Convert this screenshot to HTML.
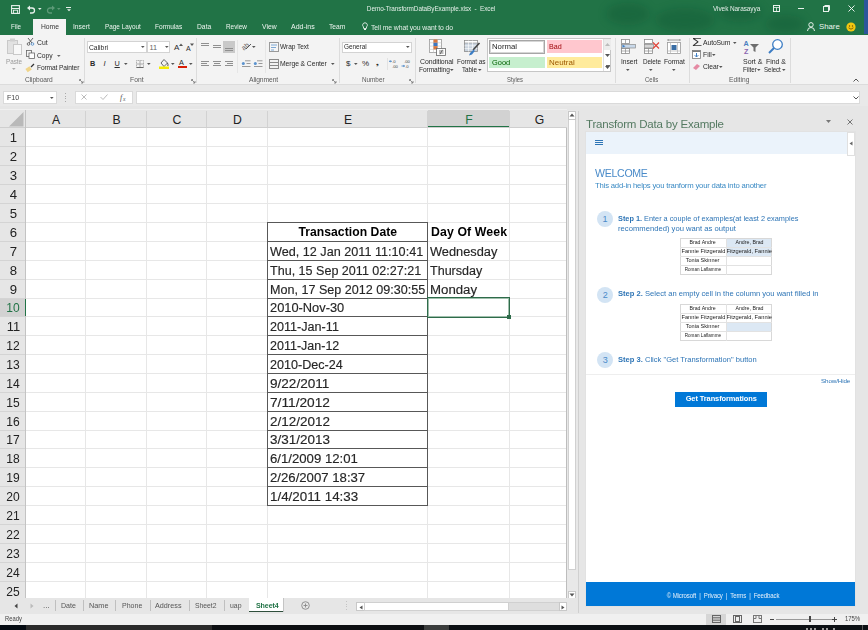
<!DOCTYPE html>
<html><head><meta charset="utf-8">
<style>
*{margin:0;padding:0;box-sizing:border-box}
html,body{width:868px;height:630px;overflow:hidden;background:#f0f0f0;font-family:"Liberation Sans",sans-serif;position:relative}
.a{position:absolute}
.t{position:absolute;white-space:nowrap;line-height:1}
svg.a{overflow:visible}
</style></head><body>
<div class="a" style="left:0px;top:0px;width:868px;height:35px;background:#217346"></div>
<div class="a" style="left:864px;top:0px;width:4px;height:34px;background:#2b579a"></div>
<svg class="a" style="left:590px;top:0px" width="230" height="34" viewBox="0 0 230 34"><defs><filter id="bl" x="-50%" y="-50%" width="200%" height="200%"><feGaussianBlur stdDeviation="4"/></filter></defs><g filter="url(#bl)" fill="#0f5530" opacity="0.35"><ellipse cx="38" cy="14" rx="22" ry="11"/><ellipse cx="95" cy="20" rx="30" ry="12"/><ellipse cx="150" cy="12" rx="22" ry="10"/><ellipse cx="195" cy="24" rx="20" ry="9"/></g></svg>
<svg class="a" style="left:11px;top:5px" width="9" height="9" viewBox="0 0 9 9"><rect x="0.6" y="0.6" width="7.8" height="7.8" fill="none" stroke="#e8f1ec" stroke-width="1.1"/><path d="M0.6,3.5 H8.4" stroke="#e8f1ec" stroke-width="1"/><rect x="2.5" y="5.2" width="4" height="3.2" fill="none" stroke="#e8f1ec" stroke-width="0.9"/></svg>
<svg class="a" style="left:27px;top:5px" width="8" height="9" viewBox="0 0 8 9"><path d="M2,3 H5 A2.5,2.5 0 0 1 5,8 H3" fill="none" stroke="#e8f1ec" stroke-width="1.3"/><polygon points="0,3 3,0.5 3,5.5" fill="#e8f1ec"/></svg>
<svg class="a" style="left:36.7px;top:7.2px" width="5.6" height="3.6" viewBox="0 0 5.6 3.6"><polygon points="1,1.08 4.6,1.08 2.8,2.8800000000000003" fill="#e8f1ec"/></svg>
<svg class="a" style="left:47px;top:5px" width="8" height="9" viewBox="0 0 8 9"><path d="M6,3 H3 A2.5,2.5 0 0 0 3,8 H5" fill="none" stroke="#5e9a78" stroke-width="1.3"/><polygon points="8,3 5,0.5 5,5.5" fill="#5e9a78"/></svg>
<svg class="a" style="left:56.2px;top:7.2px" width="5.6" height="3.6" viewBox="0 0 5.6 3.6"><polygon points="1,1.08 4.6,1.08 2.8,2.8800000000000003" fill="#5e9a78"/></svg>
<div class="a" style="left:66px;top:7px;width:5px;height:1px;background:#e8f1ec"></div>
<svg class="a" style="left:65.5px;top:8px" width="6" height="4" viewBox="0 0 6 4"><polygon points="1,1.2 5,1.2 3,3.2" fill="#e8f1ec"/></svg>
<div class="t" style="left:231.5px;width:400px;text-align:center;top:5.07px;font-size:7.6px;color:#e4efe8;letter-spacing:-0.1px;transform-origin:50% 50%;"><span style="display:inline-block;transform:scaleX(0.8440);">Demo-TransformDataByExample.xlsx&nbsp; - &nbsp;Excel</span></div>
<div class="t" style="left:712.5px;top:5.07px;font-size:7.6px;color:#e4efe8;letter-spacing:-0.1px;transform-origin:0 50%;transform:scaleX(0.8521);">Vivek Narasayya</div>
<svg class="a" style="left:773px;top:5px" width="7" height="7" viewBox="0 0 7 7"><rect x="0.5" y="0.5" width="6" height="6" fill="none" stroke="#e8f1ec"/><path d="M0.5,2.5 H6.5 M3.5,2.5 V6.5" stroke="#e8f1ec" stroke-width="0.8"/></svg>
<div class="a" style="left:798px;top:8px;width:6px;height:1px;background:#e8f1ec"></div>
<svg class="a" style="left:823px;top:5px" width="7" height="7" viewBox="0 0 7 7"><rect x="0.5" y="1.5" width="5" height="5" fill="none" stroke="#e8f1ec"/><path d="M1.5,0.5 H6.5 V5.5" fill="none" stroke="#e8f1ec"/></svg>
<svg class="a" style="left:848px;top:5px" width="7" height="7" viewBox="0 0 7 7"><path d="M0.5,0.5 L6.5,6.5 M6.5,0.5 L0.5,6.5" stroke="#e8f1ec" stroke-width="1"/></svg>
<div class="a" style="left:33px;top:19px;width:33px;height:16px;background:#f3f3f3"></div>
<div class="t" style="left:11.0px;top:22.87px;font-size:7.6px;color:#eef5f0;transform-origin:0 50%;transform:scaleX(0.8212);">File</div>
<div class="t" style="left:40.5px;top:22.87px;font-size:7.6px;color:#333;transform-origin:0 50%;transform:scaleX(0.8862);">Home</div>
<div class="t" style="left:73.19999999999999px;top:22.87px;font-size:7.6px;color:#eef5f0;transform-origin:0 50%;transform:scaleX(0.8821);">Insert</div>
<div class="t" style="left:105.0px;top:22.87px;font-size:7.6px;color:#eef5f0;transform-origin:0 50%;transform:scaleX(0.8383);">Page Layout</div>
<div class="t" style="left:155.1px;top:22.87px;font-size:7.6px;color:#eef5f0;transform-origin:0 50%;transform:scaleX(0.8611);">Formulas</div>
<div class="t" style="left:197.2px;top:22.87px;font-size:7.6px;color:#eef5f0;transform-origin:0 50%;transform:scaleX(0.8886);">Data</div>
<div class="t" style="left:226.29999999999998px;top:22.87px;font-size:7.6px;color:#eef5f0;transform-origin:0 50%;transform:scaleX(0.8375);">Review</div>
<div class="t" style="left:261.5px;top:22.87px;font-size:7.6px;color:#eef5f0;transform-origin:0 50%;transform:scaleX(0.8978);">View</div>
<div class="t" style="left:291.0px;top:22.87px;font-size:7.6px;color:#eef5f0;transform-origin:0 50%;transform:scaleX(0.9227);">Add-ins</div>
<div class="t" style="left:329.3px;top:22.87px;font-size:7.6px;color:#eef5f0;transform-origin:0 50%;transform:scaleX(0.8806);">Team</div>
<svg class="a" style="left:362px;top:22px" width="6" height="9" viewBox="0 0 6 9"><path d="M3,0.8 A2.3,2.3 0 0 1 4.6,4.8 L4.3,6.5 H1.7 L1.4,4.8 A2.3,2.3 0 0 1 3,0.8 Z" fill="none" stroke="#e8f1ec" stroke-width="0.9"/><rect x="2" y="7" width="2" height="1" fill="#e8f1ec"/></svg>
<div class="t" style="left:370.5px;top:23.57px;font-size:7.6px;color:#e4efe8;letter-spacing:-0.1px;transform-origin:0 50%;transform:scaleX(0.9016);">Tell me what you want to do</div>
<svg class="a" style="left:807px;top:22px" width="8" height="9" viewBox="0 0 8 9"><circle cx="4" cy="2.8" r="2.2" fill="none" stroke="#e8f1ec" stroke-width="1"/><path d="M0.5,9 A3.5,3.5 0 0 1 7.5,9" fill="none" stroke="#e8f1ec" stroke-width="1"/></svg>
<div class="t" style="left:819px;top:23.40px;font-size:7.8px;color:#eef5f0;transform-origin:0 50%;-webkit-text-stroke:0.25px #eef5f0transform:scaleX(0.7966);">Share</div>
<svg class="a" style="left:846px;top:22px" width="10" height="10" viewBox="0 0 10 10"><circle cx="5" cy="5" r="4.6" fill="#f2c811"/><circle cx="3.5" cy="4" r="0.7" fill="#6b4e00"/><circle cx="6.5" cy="4" r="0.7" fill="#6b4e00"/><path d="M2.6,5.8 Q5,8.6 7.4,5.8" fill="none" stroke="#6b4e00" stroke-width="0.8"/></svg>
<div class="a" style="left:0px;top:35px;width:868px;height:50px;background:#f3f3f3"></div>
<div class="a" style="left:0px;top:84px;width:868px;height:1px;background:#dcdcdc"></div>
<div class="a" style="left:84px;top:38px;width:1px;height:45px;background:#dcdcdc"></div>
<div class="a" style="left:196px;top:38px;width:1px;height:45px;background:#dcdcdc"></div>
<div class="a" style="left:339px;top:38px;width:1px;height:45px;background:#dcdcdc"></div>
<div class="a" style="left:415px;top:38px;width:1px;height:45px;background:#dcdcdc"></div>
<div class="a" style="left:615px;top:38px;width:1px;height:45px;background:#dcdcdc"></div>
<div class="a" style="left:689px;top:38px;width:1px;height:45px;background:#dcdcdc"></div>
<div class="a" style="left:790px;top:38px;width:1px;height:45px;background:#dcdcdc"></div>
<svg class="a" style="left:7px;top:38px" width="15" height="17" viewBox="0 0 15 17"><rect x="0.5" y="2.5" width="10" height="13" fill="#e2e2e2" stroke="#c9c9c9"/><rect x="3" y="0.5" width="5" height="3" fill="#d0d0d0"/><rect x="6.5" y="6.5" width="8" height="10" fill="#f8f8f8" stroke="#c9c9c9"/></svg>
<div class="t" style="left:6px;top:57.92px;font-size:7.3px;color:#9a9a9a;letter-spacing:-0.05px;transform-origin:0 50%;transform:scaleX(0.8702);">Paste</div>
<svg class="a" style="left:10.7px;top:67.2px" width="5.6" height="3.6" viewBox="0 0 5.6 3.6"><polygon points="1,1.08 4.6,1.08 2.8,2.8800000000000003" fill="#aaa"/></svg>
<svg class="a" style="left:27px;top:38px" width="7" height="8" viewBox="0 0 7 8"><circle cx="1.5" cy="6" r="1.3" fill="none" stroke="#555" stroke-width="0.8"/><circle cx="5.5" cy="6" r="1.3" fill="none" stroke="#4a88c7" stroke-width="0.8"/><path d="M1,0 L5,5 M6,0 L2,5" stroke="#555" stroke-width="0.9"/></svg>
<div class="t" style="left:36.8px;top:39.22px;font-size:7.3px;color:#2b2b2b;transform-origin:0 50%;transform:scaleX(0.9358);">Cut</div>
<svg class="a" style="left:26px;top:50px" width="9" height="9" viewBox="0 0 9 9"><rect x="0.5" y="0.5" width="5" height="6" fill="none" stroke="#666" stroke-width="0.8"/><rect x="3" y="3" width="5.5" height="5.5" fill="#fff" stroke="#666" stroke-width="0.8"/></svg>
<div class="t" style="left:36.8px;top:51.62px;font-size:7.3px;color:#2b2b2b;transform-origin:0 50%;transform:scaleX(0.9227);">Copy</div>
<svg class="a" style="left:55.7px;top:53.7px" width="5.6" height="3.6" viewBox="0 0 5.6 3.6"><polygon points="1,1.08 4.6,1.08 2.8,2.8800000000000003" fill="#666"/></svg>
<svg class="a" style="left:26px;top:63px" width="9" height="9" viewBox="0 0 9 9"><rect x="0" y="4" width="5" height="4" fill="#f0d58a" transform="rotate(-35 3 6)"/><path d="M5,4 L8,1" stroke="#333" stroke-width="1.2"/></svg>
<div class="t" style="left:36.8px;top:63.52px;font-size:7.3px;color:#2b2b2b;letter-spacing:-0.12px;transform-origin:0 50%;transform:scaleX(0.9066);">Format Painter</div>
<div class="t" style="left:25px;top:76.32px;font-size:7.3px;color:#5a5a5a;letter-spacing:-0.1px;transform-origin:0 50%;transform:scaleX(0.9106);">Clipboard</div>
<svg class="a" style="left:79px;top:79px" width="5" height="5" viewBox="0 0 5 5"><path d="M0.5,0.5 H2 M0.5,0.5 V2 M1,1 L4,4 M4,2 V4 H2" fill="none" stroke="#777" stroke-width="0.8"/></svg>
<div class="a" style="left:87px;top:41px;width:60px;height:12px;background:#fff;border:1px solid #d3d3d3"></div>
<div class="a" style="left:147px;top:41px;width:23px;height:12px;background:#fff;border:1px solid #d3d3d3"></div>
<div class="t" style="left:89px;top:43.62px;font-size:7.3px;color:#2b2b2b;transform-origin:0 50%;transform:scaleX(0.9247);">Calibri</div>
<svg class="a" style="left:140.2px;top:45.2px" width="5.6" height="3.6" viewBox="0 0 5.6 3.6"><polygon points="1,1.08 4.6,1.08 2.8,2.8800000000000003" fill="#555"/></svg>
<div class="t" style="left:149.5px;top:43.62px;font-size:7.3px;color:#666;">11</div>
<svg class="a" style="left:163.7px;top:45.2px" width="5.6" height="3.6" viewBox="0 0 5.6 3.6"><polygon points="1,1.08 4.6,1.08 2.8,2.8800000000000003" fill="#555"/></svg>
<div class="t" style="left:174px;top:43.73px;font-size:8px;color:#2b2b2b;">A</div>
<svg class="a" style="left:178.5px;top:42.5px" width="4" height="3" viewBox="0 0 4 3"><polygon points="0,3 2,0.5 4,3" fill="#555"/></svg>
<div class="t" style="left:186px;top:44.57px;font-size:7px;color:#2b2b2b;">A</div>
<svg class="a" style="left:190px;top:42.5px" width="4" height="3" viewBox="0 0 4 3"><polygon points="0,0.5 4,0.5 2,3" fill="#555"/></svg>
<div class="t" style="left:90px;top:60.12px;font-size:7.3px;color:#2b2b2b;font-weight:700;">B</div>
<div class="t" style="left:103.5px;top:59.87px;font-size:7.6px;color:#2b2b2b;font-style:italic">I</div>
<div class="t" style="left:114.5px;top:60.12px;font-size:7.3px;color:#2b2b2b;text-decoration:underline">U</div>
<svg class="a" style="left:123.2px;top:61.7px" width="5.6" height="3.6" viewBox="0 0 5.6 3.6"><polygon points="1,1.08 4.6,1.08 2.8,2.8800000000000003" fill="#555"/></svg>
<svg class="a" style="left:136px;top:60px" width="8" height="8" viewBox="0 0 8 8"><rect x="0.5" y="0.5" width="7" height="7" fill="none" stroke="#aaa" stroke-dasharray="1,0.6"/><path d="M4,0.5 V7.5 M0.5,4 H7.5" stroke="#aaa"/><path d="M0.5,7.5 H7.5" stroke="#666"/></svg>
<svg class="a" style="left:146.2px;top:61.7px" width="5.6" height="3.6" viewBox="0 0 5.6 3.6"><polygon points="1,1.08 4.6,1.08 2.8,2.8800000000000003" fill="#555"/></svg>
<svg class="a" style="left:159px;top:58px" width="10" height="11" viewBox="0 0 10 11"><path d="M2,5 L5,1.5 L8.5,5 L5,8.5 Z" fill="none" stroke="#555" stroke-width="0.9"/><path d="M8.5,5 Q9.5,7 8.8,8" stroke="#555" fill="none"/><rect x="0" y="8.5" width="10" height="2.5" fill="#f5ec00"/></svg>
<svg class="a" style="left:169.7px;top:61.7px" width="5.6" height="3.6" viewBox="0 0 5.6 3.6"><polygon points="1,1.08 4.6,1.08 2.8,2.8800000000000003" fill="#555"/></svg>
<div class="t" style="left:179px;top:58.82px;font-size:7.3px;color:#2b2b2b;">A</div>
<div class="a" style="left:177.5px;top:65.8px;width:9px;height:2.3px;background:#d81e06"></div>
<svg class="a" style="left:188.2px;top:61.7px" width="5.6" height="3.6" viewBox="0 0 5.6 3.6"><polygon points="1,1.08 4.6,1.08 2.8,2.8800000000000003" fill="#555"/></svg>
<div class="t" style="left:130px;top:76.22px;font-size:7.3px;color:#5a5a5a;transform-origin:0 50%;transform:scaleX(0.9261);">Font</div>
<svg class="a" style="left:191px;top:79px" width="5" height="5" viewBox="0 0 5 5"><path d="M0.5,0.5 H2 M0.5,0.5 V2 M1,1 L4,4 M4,2 V4 H2" fill="none" stroke="#777" stroke-width="0.8"/></svg>
<div class="a" style="left:237px;top:40px;width:1px;height:33px;background:#e6e6e6"></div>
<div class="a" style="left:265px;top:40px;width:1px;height:33px;background:#e6e6e6"></div>
<div class="a" style="left:201px;top:42.5px;width:8px;height:1px;background:#8f8f8f"></div>
<div class="a" style="left:201px;top:44.7px;width:8px;height:1px;background:#8f8f8f"></div>
<div class="a" style="left:213px;top:45.0px;width:8px;height:1px;background:#8f8f8f"></div>
<div class="a" style="left:213px;top:47.2px;width:8px;height:1px;background:#8f8f8f"></div>
<div class="a" style="left:223px;top:41px;width:12px;height:12px;background:#c9c9c9"></div>
<div class="a" style="left:225px;top:47.5px;width:8px;height:1px;background:#8f8f8f"></div>
<div class="a" style="left:225px;top:49.7px;width:8px;height:1px;background:#8f8f8f"></div>
<svg class="a" style="left:241px;top:42px" width="12" height="8" viewBox="0 0 12 8"><text x="0" y="7" font-size="7" font-family="Liberation Sans" fill="#555" transform="rotate(-40 4 4)">ab</text><path d="M5,7 L10,2" stroke="#555"/></svg>
<svg class="a" style="left:250.7px;top:44.7px" width="5.6" height="3.6" viewBox="0 0 5.6 3.6"><polygon points="1,1.08 4.6,1.08 2.8,2.8800000000000003" fill="#555"/></svg>
<svg class="a" style="left:269px;top:42px" width="10" height="10" viewBox="0 0 10 10"><rect x="0.5" y="0.5" width="9" height="9" fill="#f6f6f6" stroke="#9a9a9a"/><path d="M2,3 H8 M2,5.5 H7 M2,8 H5" stroke="#6f9fd0" stroke-width="0.9"/></svg>
<div class="t" style="left:280.2px;top:43.02px;font-size:7.3px;color:#2b2b2b;letter-spacing:-0.05px;transform-origin:0 50%;transform:scaleX(0.8970);">Wrap Text</div>
<div class="a" style="left:201px;top:61px;width:8px;height:1px;background:#8f8f8f"></div>
<div class="a" style="left:201px;top:63px;width:6px;height:1px;background:#8f8f8f"></div>
<div class="a" style="left:201px;top:65px;width:8px;height:1px;background:#8f8f8f"></div>
<div class="a" style="left:213px;top:61px;width:8px;height:1px;background:#8f8f8f"></div>
<div class="a" style="left:214px;top:63px;width:6px;height:1px;background:#8f8f8f"></div>
<div class="a" style="left:213px;top:65px;width:8px;height:1px;background:#8f8f8f"></div>
<div class="a" style="left:225px;top:61px;width:8px;height:1px;background:#8f8f8f"></div>
<div class="a" style="left:227px;top:63px;width:6px;height:1px;background:#8f8f8f"></div>
<div class="a" style="left:225px;top:65px;width:8px;height:1px;background:#8f8f8f"></div>
<svg class="a" style="left:241px;top:60px" width="10" height="8" viewBox="0 0 10 8"><path d="M4,0.8 H9.5 M5.5,3.5 H9.5 M1,6.5 H9.5" stroke="#8f8f8f" stroke-width="0.9"/><circle cx="2.3" cy="3.5" r="1.5" fill="#5b93cf"/></svg>
<svg class="a" style="left:253px;top:60px" width="10" height="8" viewBox="0 0 10 8"><path d="M4,0.8 H9.5 M5.5,3.5 H9.5 M1,6.5 H9.5" stroke="#8f8f8f" stroke-width="0.9"/><circle cx="2.3" cy="3.5" r="1.5" fill="#5b93cf"/></svg>
<svg class="a" style="left:269px;top:59px" width="10" height="10" viewBox="0 0 10 10"><rect x="0.5" y="0.5" width="9" height="9" fill="none" stroke="#8a8a8a"/><path d="M0.5,3.5 H9.5 M0.5,6.5 H9.5" stroke="#8a8a8a"/></svg>
<div class="t" style="left:280.2px;top:60.42px;font-size:7.3px;color:#2b2b2b;letter-spacing:-0.1px;transform-origin:0 50%;transform:scaleX(0.9326);">Merge &amp; Center</div>
<svg class="a" style="left:329.7px;top:61.7px" width="5.6" height="3.6" viewBox="0 0 5.6 3.6"><polygon points="1,1.08 4.6,1.08 2.8,2.8800000000000003" fill="#555"/></svg>
<div class="t" style="left:249.3px;top:75.62px;font-size:7.3px;color:#5a5a5a;letter-spacing:-0.1px;transform-origin:0 50%;transform:scaleX(0.9229);">Alignment</div>
<svg class="a" style="left:332px;top:79px" width="5" height="5" viewBox="0 0 5 5"><path d="M0.5,0.5 H2 M0.5,0.5 V2 M1,1 L4,4 M4,2 V4 H2" fill="none" stroke="#777" stroke-width="0.8"/></svg>
<div class="a" style="left:342px;top:42px;width:70px;height:11px;background:#fff;border:1px solid #d3d3d3"></div>
<div class="t" style="left:343.8px;top:43.32px;font-size:7.3px;color:#2b2b2b;letter-spacing:-0.05px;transform-origin:0 50%;transform:scaleX(0.8831);">General</div>
<svg class="a" style="left:405.2px;top:45.2px" width="5.6" height="3.6" viewBox="0 0 5.6 3.6"><polygon points="1,1.08 4.6,1.08 2.8,2.8800000000000003" fill="#555"/></svg>
<div class="t" style="left:346px;top:59.73px;font-size:8px;color:#2b2b2b;">$</div>
<svg class="a" style="left:353.2px;top:61.7px" width="5.6" height="3.6" viewBox="0 0 5.6 3.6"><polygon points="1,1.08 4.6,1.08 2.8,2.8800000000000003" fill="#555"/></svg>
<div class="t" style="left:362px;top:59.73px;font-size:8px;color:#2b2b2b;">%</div>
<div class="t" style="left:376px;top:59.07px;font-size:7px;color:#2b2b2b;">❟</div>
<div class="a" style="left:386.5px;top:58px;width:1px;height:12px;background:#e2e2e2"></div>
<svg class="a" style="left:389px;top:59px" width="10" height="9" viewBox="0 0 10 9"><text x="3" y="3.8" font-size="4.2" font-family="Liberation Sans" fill="#444">.0</text><text x="3" y="8.6" font-size="4.2" font-family="Liberation Sans" fill="#444">.00</text><path d="M0.5,2.3 H3" stroke="#3c7dc4" stroke-width="0.8"/><polygon points="0,2.3 1.5,1 1.5,3.6" fill="#3c7dc4"/></svg>
<svg class="a" style="left:401px;top:59px" width="10" height="9" viewBox="0 0 10 9"><text x="3" y="3.8" font-size="4.2" font-family="Liberation Sans" fill="#444">.00</text><text x="4" y="8.6" font-size="4.2" font-family="Liberation Sans" fill="#444">.0</text><path d="M0.5,7 H3.5" stroke="#3c7dc4" stroke-width="0.8"/><polygon points="4,7 2.5,5.7 2.5,8.3" fill="#3c7dc4"/></svg>
<div class="t" style="left:361.8px;top:76.12px;font-size:7.3px;color:#5a5a5a;transform-origin:0 50%;transform:scaleX(0.8681);">Number</div>
<svg class="a" style="left:409px;top:79px" width="5" height="5" viewBox="0 0 5 5"><path d="M0.5,0.5 H2 M0.5,0.5 V2 M1,1 L4,4 M4,2 V4 H2" fill="none" stroke="#777" stroke-width="0.8"/></svg>
<svg class="a" style="left:428px;top:38px" width="18" height="18" viewBox="0 0 18 18"><rect x="1.5" y="1.5" width="12" height="13" fill="#fff" stroke="#9a9a9a" stroke-width="0.8"/><path d="M5.5,1.5 V14.5 M9.5,1.5 V14.5 M1.5,4.8 H13.5 M1.5,8.1 H13.5 M1.5,11.4 H13.5" stroke="#c4c4c4" stroke-width="0.6"/><rect x="5.5" y="1.5" width="4" height="3.3" fill="#d9783e"/><rect x="5.5" y="4.8" width="4" height="3.3" fill="#3f78c0"/><rect x="5.5" y="8.1" width="4" height="3.3" fill="#d9783e"/><rect x="8.5" y="10.5" width="9" height="7" fill="#fff" stroke="#666" stroke-width="0.8"/><path d="M11,13 H15.5 M11,15 H15.5 M14.5,11.8 L12,16.3" stroke="#444" stroke-width="0.7"/></svg>
<div class="t" style="left:420.4px;top:58.02px;font-size:7.3px;color:#2b2b2b;letter-spacing:-0.1px;transform-origin:0 50%;transform:scaleX(0.9466);">Conditional</div>
<div class="t" style="left:419px;top:66.02px;font-size:7.3px;color:#2b2b2b;letter-spacing:-0.1px;transform-origin:0 50%;transform:scaleX(0.9072);">Formatting</div>
<svg class="a" style="left:449.2px;top:67.7px" width="5.6" height="3.6" viewBox="0 0 5.6 3.6"><polygon points="1,1.08 4.6,1.08 2.8,2.8800000000000003" fill="#555"/></svg>
<svg class="a" style="left:463px;top:39px" width="18" height="17" viewBox="0 0 18 17"><rect x="1.5" y="1.5" width="13" height="11" fill="#c9d3de" stroke="#8a8a8a" stroke-width="0.8"/><rect x="1.5" y="1.5" width="13" height="2.5" fill="#fff" stroke="#8a8a8a" stroke-width="0.6"/><path d="M5.5,1.5 V12.5 M9.5,1.5 V12.5 M1.5,6.8 H14.5 M1.5,9.6 H14.5" stroke="#fff" stroke-width="0.6"/><path d="M16.5,4 L10,11" stroke="#444" stroke-width="1.6"/><path d="M10.5,10.5 L7,14 L6,16.5 L9,15.5 L11.8,12" fill="#3c7dc4"/></svg>
<div class="t" style="left:457.3px;top:58.02px;font-size:7.3px;color:#2b2b2b;letter-spacing:-0.1px;transform-origin:0 50%;transform:scaleX(0.8897);">Format as</div>
<div class="t" style="left:461.8px;top:66.02px;font-size:7.3px;color:#2b2b2b;letter-spacing:-0.05px;transform-origin:0 50%;transform:scaleX(0.8679);">Table</div>
<svg class="a" style="left:476.7px;top:67.7px" width="5.6" height="3.6" viewBox="0 0 5.6 3.6"><polygon points="1,1.08 4.6,1.08 2.8,2.8800000000000003" fill="#555"/></svg>
<div class="a" style="left:487px;top:38px;width:124px;height:34px;background:#fff;border:1px solid #c6c6c6"></div>
<div class="a" style="left:489px;top:40px;width:56px;height:14px;background:#fff;border:1px solid #a6a6a6;box-shadow:inset 0 0 0 1px #d6d6d6"></div>
<div class="t" style="left:492px;top:43.07px;font-size:7.6px;color:#222;transform-origin:0 50%;transform:scaleX(1.0235);">Normal</div>
<div class="a" style="left:547px;top:40px;width:55px;height:13px;background:#ffc7ce"></div>
<div class="t" style="left:549px;top:43.07px;font-size:7.6px;color:#9c0006;transform-origin:0 50%;transform:scaleX(0.9441);">Bad</div>
<div class="a" style="left:489px;top:56.5px;width:56px;height:11.5px;background:#c6efce"></div>
<div class="t" style="left:491.5px;top:59.07px;font-size:7.6px;color:#006100;transform-origin:0 50%;transform:scaleX(0.9775);">Good</div>
<div class="a" style="left:547px;top:56.5px;width:55px;height:11.5px;background:#ffeb9c"></div>
<div class="t" style="left:549px;top:59.07px;font-size:7.6px;color:#9c5700;transform-origin:0 50%;transform:scaleX(1.0480);">Neutral</div>
<div class="a" style="left:603.5px;top:39px;width:7px;height:11px;background:#ececec"></div>
<div class="a" style="left:603px;top:39px;width:1px;height:32px;background:#e0e0e0"></div>
<svg class="a" style="left:605px;top:43px" width="5" height="3" viewBox="0 0 5 3"><polygon points="0,3 2.5,0 5,3" fill="#bbb"/></svg>
<svg class="a" style="left:605px;top:54px" width="5" height="3" viewBox="0 0 5 3"><polygon points="0,0 5,0 2.5,3" fill="#555"/></svg>
<div class="a" style="left:605.5px;top:64.5px;width:4px;height:0.7px;background:#666"></div>
<svg class="a" style="left:605px;top:66px" width="5" height="3" viewBox="0 0 5 3"><polygon points="0,0 5,0 2.5,3" fill="#555"/></svg>
<div class="t" style="left:507px;top:75.62px;font-size:7.3px;color:#5a5a5a;transform-origin:0 50%;transform:scaleX(0.8065);">Styles</div>
<svg class="a" style="left:621px;top:39px" width="15" height="15" viewBox="0 0 15 15"><g fill="#fff" stroke="#8a8a8a" stroke-width="0.8"><rect x="0.5" y="0.5" width="8" height="4"/><rect x="0.5" y="9.5" width="8" height="5"/></g><path d="M4.5,0.5 V4.5 M4.5,9.5 V14.5 M0.5,12 H8.5" stroke="#8a8a8a" stroke-width="0.7"/><rect x="0.5" y="5.5" width="14" height="3.5" fill="#c9d9ea" stroke="#8a8a8a" stroke-width="0.7"/><polygon points="1.5,5.8 4.5,7.2 1.5,8.6" fill="#3c7dc4"/></svg>
<div class="t" style="left:620.6px;top:58.32px;font-size:7.3px;color:#2b2b2b;letter-spacing:-0.05px;transform-origin:0 50%;transform:scaleX(0.9152);">Insert</div>
<svg class="a" style="left:625.2px;top:67.7px" width="5.6" height="3.6" viewBox="0 0 5.6 3.6"><polygon points="1,1.08 4.6,1.08 2.8,2.8800000000000003" fill="#555"/></svg>
<svg class="a" style="left:644px;top:39px" width="16" height="15" viewBox="0 0 16 15"><g fill="#fff" stroke="#8a8a8a" stroke-width="0.8"><rect x="0.5" y="0.5" width="8" height="4"/><rect x="0.5" y="9.5" width="8" height="5"/></g><path d="M4.5,9.5 V14.5 M0.5,12 H8.5" stroke="#8a8a8a" stroke-width="0.7"/><rect x="0.5" y="5.5" width="9" height="3.5" fill="#d4d4d4" stroke="#8a8a8a" stroke-width="0.7"/><path d="M9,3.5 L15,9.5 M15,3.5 L9,9.5" stroke="#e0453a" stroke-width="1.2"/></svg>
<div class="t" style="left:642.9px;top:58.32px;font-size:7.3px;color:#2b2b2b;letter-spacing:-0.05px;transform-origin:0 50%;transform:scaleX(0.8670);">Delete</div>
<svg class="a" style="left:648.2px;top:67.7px" width="5.6" height="3.6" viewBox="0 0 5.6 3.6"><polygon points="1,1.08 4.6,1.08 2.8,2.8800000000000003" fill="#555"/></svg>
<svg class="a" style="left:666px;top:39px" width="16" height="16" viewBox="0 0 16 16"><rect x="1.5" y="3.5" width="13" height="11" fill="#fff" stroke="#9a9a9a" stroke-width="0.8"/><path d="M4.5,3.5 V14.5 M11.5,3.5 V14.5 M1.5,12 H14.5" stroke="#b5b5b5" stroke-width="0.7"/><rect x="5.5" y="6" width="5" height="5" fill="#3a6ea5"/><path d="M2,1 H14 M2,0 V2 M14,0 V2" stroke="#777" stroke-width="0.7"/></svg>
<div class="t" style="left:664.2px;top:58.32px;font-size:7.3px;color:#2b2b2b;letter-spacing:-0.1px;transform-origin:0 50%;transform:scaleX(0.9207);">Format</div>
<svg class="a" style="left:671.2px;top:67.7px" width="5.6" height="3.6" viewBox="0 0 5.6 3.6"><polygon points="1,1.08 4.6,1.08 2.8,2.8800000000000003" fill="#555"/></svg>
<div class="t" style="left:645px;top:76.42px;font-size:7.3px;color:#5a5a5a;transform-origin:0 50%;transform:scaleX(0.8219);">Cells</div>
<div class="t" style="left:691.5px;top:37.27px;font-size:11.5px;color:#333;transform-origin:0 50%;transform:scaleX(1.4277);">Σ</div>
<div class="t" style="left:702.9px;top:39.12px;font-size:7.3px;color:#2b2b2b;letter-spacing:-0.1px;transform-origin:0 50%;transform:scaleX(0.9319);">AutoSum</div>
<svg class="a" style="left:732.2px;top:41.2px" width="5.6" height="3.6" viewBox="0 0 5.6 3.6"><polygon points="1,1.08 4.6,1.08 2.8,2.8800000000000003" fill="#555"/></svg>
<svg class="a" style="left:692px;top:50px" width="9" height="9" viewBox="0 0 9 9"><rect x="0.5" y="0.5" width="8" height="8" fill="#fff" stroke="#7a7a7a" stroke-width="0.8"/><rect x="0.5" y="0.5" width="8" height="1.5" fill="#7a7a7a"/><path d="M4.5,3 V7 M2.7,5.2 L4.5,7 L6.3,5.2" stroke="#3c7dc4" stroke-width="1" fill="none"/></svg>
<div class="t" style="left:702.9px;top:50.82px;font-size:7.3px;color:#2b2b2b;transform-origin:0 50%;transform:scaleX(0.9359);">Fill</div>
<svg class="a" style="left:710.7px;top:53.2px" width="5.6" height="3.6" viewBox="0 0 5.6 3.6"><polygon points="1,1.08 4.6,1.08 2.8,2.8800000000000003" fill="#555"/></svg>
<svg class="a" style="left:692px;top:63px" width="9" height="7" viewBox="0 0 9 7"><path d="M1,5 L5,1 L8,3 L4,7 Z" fill="#e58aa3"/></svg>
<div class="t" style="left:703px;top:63.12px;font-size:7.3px;color:#2b2b2b;letter-spacing:-0.05px;transform-origin:0 50%;transform:scaleX(0.9152);">Clear</div>
<svg class="a" style="left:717.7px;top:65.2px" width="5.6" height="3.6" viewBox="0 0 5.6 3.6"><polygon points="1,1.08 4.6,1.08 2.8,2.8800000000000003" fill="#555"/></svg>
<div class="t" style="left:743.6px;top:39.51px;font-size:7.2px;color:#4a7fc1;font-weight:700;">A</div>
<div class="t" style="left:744px;top:47.71px;font-size:7.2px;color:#8a63b0;font-weight:700;">Z</div>
<svg class="a" style="left:749.5px;top:43.5px" width="9" height="8" viewBox="0 0 9 8"><polygon points="0,0 9,0 5.5,3.5 5.5,8 3.5,7 3.5,3.5" fill="#6d6d6d"/></svg>
<div class="t" style="left:743px;top:57.82px;font-size:7.3px;color:#2b2b2b;letter-spacing:-0.05px;transform-origin:0 50%;transform:scaleX(0.9673);">Sort &amp;</div>
<div class="t" style="left:743px;top:66.12px;font-size:7.3px;color:#2b2b2b;letter-spacing:-0.05px;transform-origin:0 50%;transform:scaleX(0.8623);">Filter</div>
<svg class="a" style="left:756.2px;top:67.7px" width="5.6" height="3.6" viewBox="0 0 5.6 3.6"><polygon points="1,1.08 4.6,1.08 2.8,2.8800000000000003" fill="#555"/></svg>
<svg class="a" style="left:767px;top:38px" width="17" height="17" viewBox="0 0 17 17"><circle cx="10.5" cy="6.5" r="4.8" fill="#fff" stroke="#3c7dc4" stroke-width="1.3"/><path d="M7,10 L2,15" stroke="#3c7dc4" stroke-width="2"/></svg>
<div class="t" style="left:765.8px;top:57.82px;font-size:7.3px;color:#2b2b2b;letter-spacing:-0.05px;transform-origin:0 50%;transform:scaleX(0.9583);">Find &amp;</div>
<div class="t" style="left:764.3px;top:66.12px;font-size:7.3px;color:#2b2b2b;letter-spacing:-0.05px;transform-origin:0 50%;transform:scaleX(0.8372);">Select</div>
<svg class="a" style="left:781.2px;top:67.7px" width="5.6" height="3.6" viewBox="0 0 5.6 3.6"><polygon points="1,1.08 4.6,1.08 2.8,2.8800000000000003" fill="#555"/></svg>
<div class="t" style="left:729px;top:75.52px;font-size:7.3px;color:#5a5a5a;transform-origin:0 50%;transform:scaleX(0.9111);">Editing</div>
<svg class="a" style="left:853px;top:78px" width="6" height="4" viewBox="0 0 6 4"><path d="M0.5,3.5 L3,1 L5.5,3.5" fill="none" stroke="#555"/></svg>
<div class="a" style="left:0px;top:85px;width:868px;height:25px;background:#e9e9e9"></div>
<div class="a" style="left:3px;top:91px;width:54px;height:13px;background:#fff;border:1px solid #dadada"></div>
<div class="t" style="left:6.6px;top:93.62px;font-size:7.3px;color:#444;transform-origin:0 50%;transform:scaleX(0.9723);">F10</div>
<svg class="a" style="left:48.7px;top:95.7px" width="5.6" height="3.6" viewBox="0 0 5.6 3.6"><polygon points="1,1.08 4.6,1.08 2.8,2.8800000000000003" fill="#555"/></svg>
<div class="a" style="left:65px;top:93.0px;width:1px;height:1.2px;background:#aaa"></div>
<div class="a" style="left:65px;top:95.6px;width:1px;height:1.2px;background:#aaa"></div>
<div class="a" style="left:65px;top:98.2px;width:1px;height:1.2px;background:#aaa"></div>
<div class="a" style="left:65px;top:100.8px;width:1px;height:1.2px;background:#aaa"></div>
<div class="a" style="left:75px;top:91px;width:58px;height:13px;background:#fff;border:1px solid #dadada"></div>
<svg class="a" style="left:81px;top:94px" width="6" height="6" viewBox="0 0 6 6"><path d="M0.5,0.5 L5.5,5.5 M5.5,0.5 L0.5,5.5" stroke="#bbb"/></svg>
<svg class="a" style="left:100px;top:94px" width="8" height="6" viewBox="0 0 8 6"><path d="M0.5,3 L3,5.5 L7.5,0.5" fill="none" stroke="#bbb"/></svg>
<div class="t" style="left:120px;top:93.73px;font-size:8px;color:#555;font-style:italic;font-family:Liberation Serif">f</div>
<div class="t" style="left:123px;top:96.84px;font-size:5.5px;color:#555;font-style:italic;font-family:Liberation Serif">x</div>
<div class="a" style="left:136px;top:91px;width:724px;height:13px;background:#fff;border:1px solid #dadada"></div>
<div class="a" style="left:0px;top:106px;width:868px;height:4px;background:#e6e6e6"></div>
<svg class="a" style="left:853px;top:96px" width="6" height="4" viewBox="0 0 6 4"><path d="M0.5,0.5 L3,3 L5.5,0.5" fill="none" stroke="#555" stroke-width="1"/></svg>
<div class="a" style="left:0px;top:110px;width:567px;height:488px;background:#fff"></div>
<div class="a" style="left:0px;top:110px;width:567px;height:18px;background:#e6e6e6"></div>
<div class="a" style="left:0px;top:109px;width:567px;height:1px;background:#f0f0f0"></div>
<div class="a" style="left:0px;top:110px;width:25px;height:488px;background:#e6e6e6"></div>
<div class="a" style="left:428px;top:110px;width:81px;height:17px;background:#d2d2d2"></div>
<div class="a" style="left:428px;top:126px;width:81px;height:2px;background:#217346"></div>
<div class="a" style="left:0px;top:299px;width:25px;height:17px;background:#d2d2d2"></div>
<div class="a" style="left:0px;top:127px;width:567px;height:1px;background:#cfcfcf"></div>
<div class="a" style="left:26px;top:146px;width:541px;height:1px;background:#e7e7e7"></div>
<div class="a" style="left:0px;top:146px;width:25px;height:1px;background:#d4d4d4"></div>
<div class="a" style="left:26px;top:165px;width:541px;height:1px;background:#e7e7e7"></div>
<div class="a" style="left:0px;top:165px;width:25px;height:1px;background:#d4d4d4"></div>
<div class="a" style="left:26px;top:184px;width:541px;height:1px;background:#e7e7e7"></div>
<div class="a" style="left:0px;top:184px;width:25px;height:1px;background:#d4d4d4"></div>
<div class="a" style="left:26px;top:203px;width:541px;height:1px;background:#e7e7e7"></div>
<div class="a" style="left:0px;top:203px;width:25px;height:1px;background:#d4d4d4"></div>
<div class="a" style="left:26px;top:222px;width:541px;height:1px;background:#e7e7e7"></div>
<div class="a" style="left:0px;top:222px;width:25px;height:1px;background:#d4d4d4"></div>
<div class="a" style="left:26px;top:241px;width:541px;height:1px;background:#e7e7e7"></div>
<div class="a" style="left:0px;top:241px;width:25px;height:1px;background:#d4d4d4"></div>
<div class="a" style="left:26px;top:260px;width:541px;height:1px;background:#e7e7e7"></div>
<div class="a" style="left:0px;top:260px;width:25px;height:1px;background:#d4d4d4"></div>
<div class="a" style="left:26px;top:279px;width:541px;height:1px;background:#e7e7e7"></div>
<div class="a" style="left:0px;top:279px;width:25px;height:1px;background:#d4d4d4"></div>
<div class="a" style="left:26px;top:298px;width:541px;height:1px;background:#e7e7e7"></div>
<div class="a" style="left:0px;top:298px;width:25px;height:1px;background:#d4d4d4"></div>
<div class="a" style="left:26px;top:316px;width:541px;height:1px;background:#e7e7e7"></div>
<div class="a" style="left:0px;top:316px;width:25px;height:1px;background:#d4d4d4"></div>
<div class="a" style="left:26px;top:335px;width:541px;height:1px;background:#e7e7e7"></div>
<div class="a" style="left:0px;top:335px;width:25px;height:1px;background:#d4d4d4"></div>
<div class="a" style="left:26px;top:354px;width:541px;height:1px;background:#e7e7e7"></div>
<div class="a" style="left:0px;top:354px;width:25px;height:1px;background:#d4d4d4"></div>
<div class="a" style="left:26px;top:373px;width:541px;height:1px;background:#e7e7e7"></div>
<div class="a" style="left:0px;top:373px;width:25px;height:1px;background:#d4d4d4"></div>
<div class="a" style="left:26px;top:392px;width:541px;height:1px;background:#e7e7e7"></div>
<div class="a" style="left:0px;top:392px;width:25px;height:1px;background:#d4d4d4"></div>
<div class="a" style="left:26px;top:411px;width:541px;height:1px;background:#e7e7e7"></div>
<div class="a" style="left:0px;top:411px;width:25px;height:1px;background:#d4d4d4"></div>
<div class="a" style="left:26px;top:430px;width:541px;height:1px;background:#e7e7e7"></div>
<div class="a" style="left:0px;top:430px;width:25px;height:1px;background:#d4d4d4"></div>
<div class="a" style="left:26px;top:448px;width:541px;height:1px;background:#e7e7e7"></div>
<div class="a" style="left:0px;top:448px;width:25px;height:1px;background:#d4d4d4"></div>
<div class="a" style="left:26px;top:467px;width:541px;height:1px;background:#e7e7e7"></div>
<div class="a" style="left:0px;top:467px;width:25px;height:1px;background:#d4d4d4"></div>
<div class="a" style="left:26px;top:486px;width:541px;height:1px;background:#e7e7e7"></div>
<div class="a" style="left:0px;top:486px;width:25px;height:1px;background:#d4d4d4"></div>
<div class="a" style="left:26px;top:505px;width:541px;height:1px;background:#e7e7e7"></div>
<div class="a" style="left:0px;top:505px;width:25px;height:1px;background:#d4d4d4"></div>
<div class="a" style="left:26px;top:524px;width:541px;height:1px;background:#e7e7e7"></div>
<div class="a" style="left:0px;top:524px;width:25px;height:1px;background:#d4d4d4"></div>
<div class="a" style="left:26px;top:543px;width:541px;height:1px;background:#e7e7e7"></div>
<div class="a" style="left:0px;top:543px;width:25px;height:1px;background:#d4d4d4"></div>
<div class="a" style="left:26px;top:562px;width:541px;height:1px;background:#e7e7e7"></div>
<div class="a" style="left:0px;top:562px;width:25px;height:1px;background:#d4d4d4"></div>
<div class="a" style="left:26px;top:581px;width:541px;height:1px;background:#e7e7e7"></div>
<div class="a" style="left:0px;top:581px;width:25px;height:1px;background:#d4d4d4"></div>
<div class="a" style="left:26px;top:600px;width:541px;height:1px;background:#e7e7e7"></div>
<div class="a" style="left:0px;top:600px;width:25px;height:1px;background:#d4d4d4"></div>
<div class="a" style="left:25px;top:110px;width:1px;height:488px;background:#c3c3c3"></div>
<div class="a" style="left:85px;top:128px;width:1px;height:470px;background:#e7e7e7"></div>
<div class="a" style="left:85px;top:111px;width:1px;height:16px;background:#d2d2d2"></div>
<div class="a" style="left:146px;top:128px;width:1px;height:470px;background:#e7e7e7"></div>
<div class="a" style="left:146px;top:111px;width:1px;height:16px;background:#d2d2d2"></div>
<div class="a" style="left:206px;top:128px;width:1px;height:470px;background:#e7e7e7"></div>
<div class="a" style="left:206px;top:111px;width:1px;height:16px;background:#d2d2d2"></div>
<div class="a" style="left:267px;top:128px;width:1px;height:470px;background:#e7e7e7"></div>
<div class="a" style="left:267px;top:111px;width:1px;height:16px;background:#d2d2d2"></div>
<div class="a" style="left:427px;top:128px;width:1px;height:470px;background:#e7e7e7"></div>
<div class="a" style="left:427px;top:111px;width:1px;height:16px;background:#d2d2d2"></div>
<div class="a" style="left:509px;top:128px;width:1px;height:470px;background:#e7e7e7"></div>
<div class="a" style="left:509px;top:111px;width:1px;height:16px;background:#d2d2d2"></div>
<div class="a" style="left:566px;top:128px;width:1px;height:470px;background:#bdbdbd"></div>
<div class="a" style="left:25px;top:299px;width:1px;height:17px;background:#217346"></div>
<svg class="a" style="left:8px;top:111px" width="16" height="16"><polygon points="15.5,1 15.5,15.5 1,15.5" fill="#b9b9b9"/></svg>
<div class="t" style="left:-144.0px;width:400px;text-align:center;top:113.77px;font-size:12.2px;color:#222;">A</div>
<div class="t" style="left:-83.5px;width:400px;text-align:center;top:113.77px;font-size:12.2px;color:#222;">B</div>
<div class="t" style="left:-23.0px;width:400px;text-align:center;top:113.77px;font-size:12.2px;color:#222;">C</div>
<div class="t" style="left:37.5px;width:400px;text-align:center;top:113.77px;font-size:12.2px;color:#222;">D</div>
<div class="t" style="left:148.0px;width:400px;text-align:center;top:113.77px;font-size:12.2px;color:#222;">E</div>
<div class="t" style="left:269.0px;width:400px;text-align:center;top:113.77px;font-size:12.2px;color:#217346;">F</div>
<div class="t" style="left:339.5px;width:400px;text-align:center;top:113.77px;font-size:12.2px;color:#222;">G</div>
<div class="t" style="left:-187px;width:400px;text-align:center;top:131.50px;font-size:12.4px;color:#222;transform-origin:50% 50%;"><span style="display:inline-block;transform:scaleX(1.0628);">1</span></div>
<div class="t" style="left:-187px;width:400px;text-align:center;top:150.50px;font-size:12.4px;color:#222;transform-origin:50% 50%;"><span style="display:inline-block;transform:scaleX(1.0628);">2</span></div>
<div class="t" style="left:-187px;width:400px;text-align:center;top:169.50px;font-size:12.4px;color:#222;transform-origin:50% 50%;"><span style="display:inline-block;transform:scaleX(1.0628);">3</span></div>
<div class="t" style="left:-187px;width:400px;text-align:center;top:188.50px;font-size:12.4px;color:#222;transform-origin:50% 50%;"><span style="display:inline-block;transform:scaleX(1.0628);">4</span></div>
<div class="t" style="left:-187px;width:400px;text-align:center;top:207.50px;font-size:12.4px;color:#222;transform-origin:50% 50%;"><span style="display:inline-block;transform:scaleX(1.0628);">5</span></div>
<div class="t" style="left:-187px;width:400px;text-align:center;top:226.50px;font-size:12.4px;color:#222;transform-origin:50% 50%;"><span style="display:inline-block;transform:scaleX(1.0628);">6</span></div>
<div class="t" style="left:-187px;width:400px;text-align:center;top:245.50px;font-size:12.4px;color:#222;transform-origin:50% 50%;"><span style="display:inline-block;transform:scaleX(1.0628);">7</span></div>
<div class="t" style="left:-187px;width:400px;text-align:center;top:264.50px;font-size:12.4px;color:#222;transform-origin:50% 50%;"><span style="display:inline-block;transform:scaleX(1.0628);">8</span></div>
<div class="t" style="left:-187px;width:400px;text-align:center;top:283.50px;font-size:12.4px;color:#222;transform-origin:50% 50%;"><span style="display:inline-block;transform:scaleX(1.0628);">9</span></div>
<div class="t" style="left:-187px;width:400px;text-align:center;top:301.50px;font-size:12.4px;color:#217346;transform-origin:50% 50%;"><span style="display:inline-block;transform:scaleX(0.9741);">10</span></div>
<div class="t" style="left:-187px;width:400px;text-align:center;top:320.50px;font-size:12.4px;color:#222;transform-origin:50% 50%;"><span style="display:inline-block;transform:scaleX(1.0439);">11</span></div>
<div class="t" style="left:-187px;width:400px;text-align:center;top:339.50px;font-size:12.4px;color:#222;transform-origin:50% 50%;"><span style="display:inline-block;transform:scaleX(0.9741);">12</span></div>
<div class="t" style="left:-187px;width:400px;text-align:center;top:358.50px;font-size:12.4px;color:#222;transform-origin:50% 50%;"><span style="display:inline-block;transform:scaleX(0.9741);">13</span></div>
<div class="t" style="left:-187px;width:400px;text-align:center;top:377.50px;font-size:12.4px;color:#222;transform-origin:50% 50%;"><span style="display:inline-block;transform:scaleX(0.9741);">14</span></div>
<div class="t" style="left:-187px;width:400px;text-align:center;top:396.50px;font-size:12.4px;color:#222;transform-origin:50% 50%;"><span style="display:inline-block;transform:scaleX(0.9741);">15</span></div>
<div class="t" style="left:-187px;width:400px;text-align:center;top:415.50px;font-size:12.4px;color:#222;transform-origin:50% 50%;"><span style="display:inline-block;transform:scaleX(0.9741);">16</span></div>
<div class="t" style="left:-187px;width:400px;text-align:center;top:433.50px;font-size:12.4px;color:#222;transform-origin:50% 50%;"><span style="display:inline-block;transform:scaleX(0.9741);">17</span></div>
<div class="t" style="left:-187px;width:400px;text-align:center;top:452.50px;font-size:12.4px;color:#222;transform-origin:50% 50%;"><span style="display:inline-block;transform:scaleX(0.9741);">18</span></div>
<div class="t" style="left:-187px;width:400px;text-align:center;top:471.50px;font-size:12.4px;color:#222;transform-origin:50% 50%;"><span style="display:inline-block;transform:scaleX(0.9741);">19</span></div>
<div class="t" style="left:-187px;width:400px;text-align:center;top:490.50px;font-size:12.4px;color:#222;transform-origin:50% 50%;"><span style="display:inline-block;transform:scaleX(0.9741);">20</span></div>
<div class="t" style="left:-187px;width:400px;text-align:center;top:509.50px;font-size:12.4px;color:#222;transform-origin:50% 50%;"><span style="display:inline-block;transform:scaleX(0.9741);">21</span></div>
<div class="t" style="left:-187px;width:400px;text-align:center;top:528.50px;font-size:12.4px;color:#222;transform-origin:50% 50%;"><span style="display:inline-block;transform:scaleX(0.9741);">22</span></div>
<div class="t" style="left:-187px;width:400px;text-align:center;top:547.50px;font-size:12.4px;color:#222;transform-origin:50% 50%;"><span style="display:inline-block;transform:scaleX(0.9741);">23</span></div>
<div class="t" style="left:-187px;width:400px;text-align:center;top:566.50px;font-size:12.4px;color:#222;transform-origin:50% 50%;"><span style="display:inline-block;transform:scaleX(0.9741);">24</span></div>
<div class="t" style="left:-187px;width:400px;text-align:center;top:585.50px;font-size:12.4px;color:#222;transform-origin:50% 50%;"><span style="display:inline-block;transform:scaleX(0.9741);">25</span></div>
<div class="a" style="left:267px;top:222px;width:161px;height:1px;background:#585858"></div>
<div class="a" style="left:267px;top:241px;width:161px;height:1px;background:#585858"></div>
<div class="a" style="left:267px;top:260px;width:161px;height:1px;background:#585858"></div>
<div class="a" style="left:267px;top:279px;width:161px;height:1px;background:#585858"></div>
<div class="a" style="left:267px;top:298px;width:161px;height:1px;background:#585858"></div>
<div class="a" style="left:267px;top:316px;width:161px;height:1px;background:#585858"></div>
<div class="a" style="left:267px;top:335px;width:161px;height:1px;background:#585858"></div>
<div class="a" style="left:267px;top:354px;width:161px;height:1px;background:#585858"></div>
<div class="a" style="left:267px;top:373px;width:161px;height:1px;background:#585858"></div>
<div class="a" style="left:267px;top:392px;width:161px;height:1px;background:#585858"></div>
<div class="a" style="left:267px;top:411px;width:161px;height:1px;background:#585858"></div>
<div class="a" style="left:267px;top:430px;width:161px;height:1px;background:#585858"></div>
<div class="a" style="left:267px;top:448px;width:161px;height:1px;background:#585858"></div>
<div class="a" style="left:267px;top:467px;width:161px;height:1px;background:#585858"></div>
<div class="a" style="left:267px;top:486px;width:161px;height:1px;background:#585858"></div>
<div class="a" style="left:267px;top:505px;width:161px;height:1px;background:#585858"></div>
<div class="a" style="left:267px;top:222px;width:1px;height:284px;background:#585858"></div>
<div class="a" style="left:427px;top:222px;width:1px;height:284px;background:#585858"></div>
<div class="t" style="left:147.5px;width:400px;text-align:center;top:226.34px;font-size:12px;color:#000;font-weight:700;letter-spacing:0.05px;transform-origin:50% 50%;"><span style="display:inline-block;transform:scaleX(1.0123);">Transaction Date</span></div>
<div class="t" style="left:270px;top:245.54px;font-size:12px;color:#262626;transform-origin:0 50%;-webkit-text-stroke:0.15px #262626;transform:scaleX(1.0533);">Wed, 12 Jan 2011 11:10:41</div>
<div class="t" style="left:270px;top:264.54px;font-size:12px;color:#262626;transform-origin:0 50%;-webkit-text-stroke:0.15px #262626;transform:scaleX(1.0459);">Thu, 15 Sep 2011 02:27:21</div>
<div class="t" style="left:270px;top:283.54px;font-size:12px;color:#262626;transform-origin:0 50%;-webkit-text-stroke:0.15px #262626;transform:scaleX(1.0478);">Mon, 17 Sep 2012 09:30:55</div>
<div class="t" style="left:270px;top:301.54px;font-size:12px;color:#262626;transform-origin:0 50%;-webkit-text-stroke:0.15px #262626;transform:scaleX(1.0695);">2010-Nov-30</div>
<div class="t" style="left:270px;top:320.54px;font-size:12px;color:#262626;transform-origin:0 50%;-webkit-text-stroke:0.15px #262626;transform:scaleX(1.0502);">2011-Jan-11</div>
<div class="t" style="left:270px;top:339.54px;font-size:12px;color:#262626;transform-origin:0 50%;-webkit-text-stroke:0.15px #262626;transform:scaleX(1.0421);">2011-Jan-12</div>
<div class="t" style="left:270px;top:358.54px;font-size:12px;color:#262626;transform-origin:0 50%;-webkit-text-stroke:0.15px #262626;transform:scaleX(1.0479);">2010-Dec-24</div>
<div class="t" style="left:270px;top:377.54px;font-size:12px;color:#262626;transform-origin:0 50%;-webkit-text-stroke:0.15px #262626;transform:scaleX(1.1314);">9/22/2011</div>
<div class="t" style="left:270px;top:396.54px;font-size:12px;color:#262626;transform-origin:0 50%;-webkit-text-stroke:0.15px #262626;transform:scaleX(1.1410);">7/11/2012</div>
<div class="t" style="left:270px;top:415.54px;font-size:12px;color:#262626;transform-origin:0 50%;-webkit-text-stroke:0.15px #262626;transform:scaleX(1.1219);">2/12/2012</div>
<div class="t" style="left:270px;top:433.54px;font-size:12px;color:#262626;transform-origin:0 50%;-webkit-text-stroke:0.15px #262626;transform:scaleX(1.1219);">3/31/2013</div>
<div class="t" style="left:270px;top:452.54px;font-size:12px;color:#262626;transform-origin:0 50%;-webkit-text-stroke:0.15px #262626;transform:scaleX(1.0977);">6/1/2009 12:01</div>
<div class="t" style="left:270px;top:471.54px;font-size:12px;color:#262626;transform-origin:0 50%;-webkit-text-stroke:0.15px #262626;transform:scaleX(1.0974);">2/26/2007 18:37</div>
<div class="t" style="left:270px;top:490.54px;font-size:12px;color:#262626;transform-origin:0 50%;-webkit-text-stroke:0.15px #262626;transform:scaleX(1.1138);">1/4/2011 14:33</div>
<div class="t" style="left:430.5px;top:226.34px;font-size:12px;color:#000;font-weight:700;letter-spacing:0.12px;transform-origin:0 50%;transform:scaleX(1.0232);">Day Of Week</div>
<div class="t" style="left:430px;top:245.54px;font-size:12px;color:#262626;transform-origin:0 50%;-webkit-text-stroke:0.15px #262626;transform:scaleX(1.0672);">Wednesday</div>
<div class="t" style="left:430px;top:264.54px;font-size:12px;color:#262626;transform-origin:0 50%;-webkit-text-stroke:0.15px #262626;transform:scaleX(1.0453);">Thursday</div>
<div class="t" style="left:430px;top:283.54px;font-size:12px;color:#262626;transform-origin:0 50%;-webkit-text-stroke:0.15px #262626;transform:scaleX(1.1030);">Monday</div>
<div class="a" style="left:426.5px;top:297px;width:83.5px;height:20.5px;border:1px solid #2e6b4a;box-shadow:inset 0 0 0 1px #9fbfac"></div>
<div class="a" style="left:507px;top:315px;width:4px;height:4px;background:#2e6b4a"></div>
<div class="a" style="left:567px;top:110px;width:11px;height:488px;background:#e8e8e8"></div>
<div class="a" style="left:568px;top:111px;width:8px;height:459px;background:#fff;border:1px solid #d0d0d0"></div>
<div class="a" style="left:568px;top:111px;width:8px;height:9px;background:#fff;border:1px solid #c8c8c8"></div>
<svg class="a" style="left:569px;top:113px" width="6" height="4" viewBox="0 0 6 4"><polygon points="0.5,3.5 3,0.5 5.5,3.5" fill="#555"/></svg>
<div class="a" style="left:568px;top:591px;width:8px;height:8px;background:#fff;border:1px solid #c8c8c8"></div>
<svg class="a" style="left:569px;top:593px" width="6" height="4" viewBox="0 0 6 4"><polygon points="0.5,0.5 3,3.5 5.5,0.5" fill="#555"/></svg>
<div class="a" style="left:578px;top:106px;width:290px;height:508px;background:#e6e6e6"></div>
<div class="a" style="left:578px;top:111px;width:1px;height:502px;background:#d0d0d0"></div>
<div class="t" style="left:586px;top:118.69px;font-size:11px;color:#557a62;letter-spacing:-0.2px;transform-origin:0 50%;transform:scaleX(1.0477);">Transform Data by Example</div>
<svg class="a" style="left:826px;top:120px" width="5" height="3" viewBox="0 0 5 3"><polygon points="0,0 5,0 2.5,3" fill="#777"/></svg>
<svg class="a" style="left:847px;top:119px" width="6" height="6" viewBox="0 0 6 6"><path d="M0.5,0.5 L5.5,5.5 M5.5,0.5 L0.5,5.5" stroke="#666" stroke-width="0.9"/></svg>
<div class="a" style="left:585px;top:131px;width:271px;height:476px;background:#fff;border:1px solid #e2e2e2"></div>
<div class="a" style="left:586px;top:132px;width:261px;height:22px;background:#ebf3fb"></div>
<div class="a" style="left:847px;top:132px;width:8px;height:24px;background:#fff;border:1px solid #e0e0e0"></div>
<svg class="a" style="left:849px;top:141px" width="4" height="5" viewBox="0 0 4 5"><polygon points="3.5,0.5 0.5,2.5 3.5,4.5" fill="#666"/></svg>
<div class="a" style="left:595px;top:139.5px;width:8px;height:1.3px;background:#2e75b6"></div>
<div class="a" style="left:595px;top:141.8px;width:8px;height:1.3px;background:#2e75b6"></div>
<div class="a" style="left:595px;top:144.1px;width:8px;height:1.3px;background:#2e75b6"></div>
<div class="t" style="left:594.5px;top:168.09px;font-size:11px;color:#4a8bc9;letter-spacing:-0.3px;transform-origin:0 50%;transform:scaleX(0.9607);">WELCOME</div>
<div class="t" style="left:594.5px;top:182.07px;font-size:7px;color:#3a8ac4;letter-spacing:-0.18px;transform-origin:0 50%;transform:scaleX(1.1047);">This add-in helps you tranform your data into another</div>
<div class="a" style="left:597px;top:211px;width:16px;height:16px;border-radius:50%;background:#d3e4f4"></div>
<div class="t" style="left:405px;width:400px;text-align:center;top:214.68px;font-size:9px;color:#4a8bc9;">1</div>
<div class="t" style="left:618.4px;top:215.03px;font-size:8px;color:#2e75b6;transform-origin:0 50%;transform:scaleX(0.9157);"><b>Step 1.</b> Enter a couple of examples(at least 2 examples</div>
<div class="t" style="left:618.4px;top:225.03px;font-size:8px;color:#2e75b6;transform-origin:0 50%;transform:scaleX(0.9563);">recommended) you want as output</div>
<div class="a" style="left:680px;top:238px;width:92px;height:37px;border:1px solid #d8d8d8"></div>
<div class="a" style="left:726px;top:239px;width:45px;height:8px;background:#dce8f4"></div>
<div class="t" style="left:503px;width:400px;text-align:center;top:239.89px;font-size:5.8px;color:#222;transform-origin:50% 50%;"><span style="display:inline-block;transform:scaleX(0.8988);">Brad Andre</span></div>
<div class="t" style="left:549px;width:400px;text-align:center;top:239.89px;font-size:5.8px;color:#222;transform-origin:50% 50%;"><span style="display:inline-block;transform:scaleX(0.9076);">Andre, Brad</span></div>
<div class="a" style="left:726px;top:248px;width:45px;height:8px;background:#dce8f4"></div>
<div class="a" style="left:680px;top:247px;width:92px;height:1px;background:#e2e2e2"></div>
<div class="t" style="left:503px;width:400px;text-align:center;top:248.89px;font-size:5.8px;color:#222;transform-origin:50% 50%;"><span style="display:inline-block;transform:scaleX(0.9806);">Fannie Fitzgerald</span></div>
<div class="t" style="left:549px;width:400px;text-align:center;top:248.89px;font-size:5.8px;color:#222;transform-origin:50% 50%;"><span style="display:inline-block;transform:scaleX(0.9822);">Fitzgerald, Fannie</span></div>
<div class="a" style="left:680px;top:256px;width:92px;height:1px;background:#e2e2e2"></div>
<div class="t" style="left:503px;width:400px;text-align:center;top:257.89px;font-size:5.8px;color:#222;transform-origin:50% 50%;"><span style="display:inline-block;transform:scaleX(0.9603);">Tonia Skinner</span></div>
<div class="a" style="left:680px;top:265px;width:92px;height:1px;background:#e2e2e2"></div>
<div class="t" style="left:503px;width:400px;text-align:center;top:266.89px;font-size:5.8px;color:#222;transform-origin:50% 50%;"><span style="display:inline-block;transform:scaleX(0.7930);">Roman Laflamme</span></div>
<div class="a" style="left:726px;top:238px;width:1px;height:37px;background:#e2e2e2"></div>
<div class="a" style="left:597.2px;top:287.2px;width:16px;height:16px;border-radius:50%;background:#d3e4f4"></div>
<div class="t" style="left:405.20000000000005px;width:400px;text-align:center;top:290.88px;font-size:9px;color:#4a8bc9;">2</div>
<div class="t" style="left:618.3px;top:290.23px;font-size:8px;color:#2e75b6;transform-origin:0 50%;transform:scaleX(0.9488);"><b>Step 2.</b> Select an empty cell in the column you want filled in</div>
<div class="a" style="left:680px;top:304px;width:92px;height:37px;border:1px solid #d8d8d8"></div>
<div class="t" style="left:503px;width:400px;text-align:center;top:305.89px;font-size:5.8px;color:#222;transform-origin:50% 50%;"><span style="display:inline-block;transform:scaleX(0.8988);">Brad Andre</span></div>
<div class="t" style="left:549px;width:400px;text-align:center;top:305.89px;font-size:5.8px;color:#222;transform-origin:50% 50%;"><span style="display:inline-block;transform:scaleX(0.9076);">Andre, Brad</span></div>
<div class="a" style="left:680px;top:313px;width:92px;height:1px;background:#e2e2e2"></div>
<div class="t" style="left:503px;width:400px;text-align:center;top:314.89px;font-size:5.8px;color:#222;transform-origin:50% 50%;"><span style="display:inline-block;transform:scaleX(0.9806);">Fannie Fitzgerald</span></div>
<div class="t" style="left:549px;width:400px;text-align:center;top:314.89px;font-size:5.8px;color:#222;transform-origin:50% 50%;"><span style="display:inline-block;transform:scaleX(0.9822);">Fitzgerald, Fannie</span></div>
<div class="a" style="left:726px;top:323px;width:45px;height:8px;background:#dce8f4"></div>
<div class="a" style="left:680px;top:322px;width:92px;height:1px;background:#e2e2e2"></div>
<div class="t" style="left:503px;width:400px;text-align:center;top:323.89px;font-size:5.8px;color:#222;transform-origin:50% 50%;"><span style="display:inline-block;transform:scaleX(0.9603);">Tonia Skinner</span></div>
<div class="a" style="left:680px;top:331px;width:92px;height:1px;background:#e2e2e2"></div>
<div class="t" style="left:503px;width:400px;text-align:center;top:332.89px;font-size:5.8px;color:#222;transform-origin:50% 50%;"><span style="display:inline-block;transform:scaleX(0.7930);">Roman Laflamme</span></div>
<div class="a" style="left:726px;top:304px;width:1px;height:37px;background:#e2e2e2"></div>
<div class="a" style="left:597.2px;top:352.2px;width:16px;height:16px;border-radius:50%;background:#d3e4f4"></div>
<div class="t" style="left:405.20000000000005px;width:400px;text-align:center;top:355.88px;font-size:9px;color:#4a8bc9;">3</div>
<div class="t" style="left:618.3px;top:355.63px;font-size:8px;color:#2e75b6;transform-origin:0 50%;transform:scaleX(0.9465);"><b>Step 3.</b> Click "Get Transformation" button</div>
<div class="a" style="left:586px;top:374px;width:269px;height:1px;background:#eeeeee"></div>
<div class="t" style="left:449.6px;width:400px;text-align:right;top:378.89px;font-size:5.8px;color:#2e75b6;letter-spacing:-0.1px;transform-origin:100% 50%;"><span style="display:inline-block;transform:scaleX(1.0751);">Show/Hide</span></div>
<div class="a" style="left:675px;top:392px;width:92px;height:15px;background:#0078d7"></div>
<div class="t" style="left:521px;width:400px;text-align:center;top:395.37px;font-size:7.6px;color:#fff;font-weight:700;letter-spacing:-0.1px;transform-origin:50% 50%;"><span style="display:inline-block;transform:scaleX(0.9818);">Get Transformations</span></div>
<div class="a" style="left:586px;top:582px;width:269px;height:24px;background:#0078d7"></div>
<div class="t" style="left:522.7px;width:400px;text-align:center;top:593.01px;font-size:6.6px;color:#e6f1fb;letter-spacing:-0.15px;transform-origin:50% 50%;"><span style="display:inline-block;transform:scaleX(0.9212);">© Microsoft &nbsp;| &nbsp;Privacy &nbsp;| &nbsp;Terms &nbsp;| &nbsp;Feedback</span></div>
<div class="a" style="left:0px;top:598px;width:578px;height:16px;background:#e6e6e6"></div>
<svg class="a" style="left:14px;top:603px" width="4" height="6" viewBox="0 0 4 6"><polygon points="3.5,0.5 0.5,3 3.5,5.5" fill="#444"/></svg>
<svg class="a" style="left:30px;top:603px" width="4" height="6" viewBox="0 0 4 6"><polygon points="0.5,0.5 3.5,3 0.5,5.5" fill="#bbb"/></svg>
<div class="t" style="left:43.4px;top:601.82px;font-size:7.3px;color:#444;transform-origin:0 50%;transform:scaleX(1.1044);">...</div>
<div class="a" style="left:54.7px;top:600px;width:1px;height:11px;background:#bfbfbf"></div>
<div class="a" style="left:82.7px;top:600px;width:1px;height:11px;background:#bfbfbf"></div>
<div class="a" style="left:115.3px;top:600px;width:1px;height:11px;background:#bfbfbf"></div>
<div class="a" style="left:149.5px;top:600px;width:1px;height:11px;background:#bfbfbf"></div>
<div class="a" style="left:188.7px;top:600px;width:1px;height:11px;background:#bfbfbf"></div>
<div class="a" style="left:223.7px;top:600px;width:1px;height:11px;background:#bfbfbf"></div>
<div class="t" style="left:60.7px;top:602.02px;font-size:7.3px;color:#555;transform-origin:0 50%;transform:scaleX(0.9681);">Date</div>
<div class="t" style="left:88.69999999999999px;top:602.02px;font-size:7.3px;color:#555;transform-origin:0 50%;transform:scaleX(0.9980);">Name</div>
<div class="t" style="left:121.5px;top:602.02px;font-size:7.3px;color:#555;transform-origin:0 50%;transform:scaleX(0.9631);">Phone</div>
<div class="t" style="left:154.9px;top:602.02px;font-size:7.3px;color:#555;transform-origin:0 50%;transform:scaleX(0.9906);">Address</div>
<div class="t" style="left:195.2px;top:602.02px;font-size:7.3px;color:#555;transform-origin:0 50%;transform:scaleX(0.9304);">Sheet2</div>
<div class="t" style="left:229.79999999999998px;top:602.02px;font-size:7.3px;color:#555;transform-origin:0 50%;transform:scaleX(0.9461);">uap</div>
<div class="a" style="left:249px;top:598px;width:35px;height:14px;background:#fff;border-right:1px solid #c4c4c4"></div>
<div class="a" style="left:249px;top:611px;width:34px;height:1px;background:#2f4f3c"></div>
<div class="t" style="left:255.5px;top:601.62px;font-size:7.3px;color:#217346;font-weight:700;letter-spacing:-0.1px;transform-origin:0 50%;transform:scaleX(0.9694);">Sheet4</div>
<svg class="a" style="left:301px;top:601px" width="9" height="9" viewBox="0 0 9 9"><circle cx="4.5" cy="4.5" r="3.8" fill="none" stroke="#888" stroke-width="0.9"/><path d="M4.5,2.5 V6.5 M2.5,4.5 H6.5" stroke="#888" stroke-width="0.9"/></svg>
<div class="a" style="left:346px;top:601.0px;width:1px;height:1.2px;background:#c4c4c4"></div>
<div class="a" style="left:346px;top:603.6px;width:1px;height:1.2px;background:#c4c4c4"></div>
<div class="a" style="left:346px;top:606.2px;width:1px;height:1.2px;background:#c4c4c4"></div>
<div class="a" style="left:346px;top:608.8px;width:1px;height:1.2px;background:#c4c4c4"></div>
<div class="a" style="left:356px;top:602px;width:211px;height:9px;background:#dedede;border:1px solid #d0d0d0"></div>
<div class="a" style="left:356px;top:602px;width:9px;height:9px;background:#fff;border:1px solid #c8c8c8"></div>
<svg class="a" style="left:358.5px;top:604.5px" width="4" height="5" viewBox="0 0 4 5"><polygon points="3.5,0.5 0.5,2.5 3.5,4.5" fill="#555"/></svg>
<div class="a" style="left:364px;top:602px;width:145px;height:9px;background:#fff;border:1px solid #d0d0d0"></div>
<div class="a" style="left:559px;top:602px;width:8px;height:9px;background:#fff;border:1px solid #c8c8c8"></div>
<svg class="a" style="left:561px;top:604.5px" width="4" height="5" viewBox="0 0 4 5"><polygon points="0.5,0.5 3.5,2.5 0.5,4.5" fill="#555"/></svg>
<div class="a" style="left:0px;top:614px;width:868px;height:11px;background:#f0f0f0"></div>
<div class="t" style="left:4.5px;top:616.41px;font-size:6.6px;color:#444;transform-origin:0 50%;transform:scaleX(0.8845);">Ready</div>
<div class="a" style="left:706px;top:614px;width:20px;height:11px;background:#d6d6d6"></div>
<svg class="a" style="left:712px;top:615px" width="9" height="8" viewBox="0 0 9 8"><rect x="0.5" y="0.5" width="8" height="7" fill="none" stroke="#666"/><path d="M0.5,2.8 H8.5 M0.5,5.2 H8.5" stroke="#666"/></svg>
<svg class="a" style="left:733px;top:615px" width="9" height="8" viewBox="0 0 9 8"><rect x="0.5" y="0.5" width="8" height="7" fill="none" stroke="#666"/><rect x="2.5" y="1.5" width="4" height="5" fill="none" stroke="#666"/></svg>
<svg class="a" style="left:753px;top:615px" width="9" height="8" viewBox="0 0 9 8"><rect x="0.5" y="0.5" width="8" height="7" fill="none" stroke="#777"/><path d="M0.5,3.5 H3 M6,3.5 H8.5 M3,0.5 V3.5 M6,0.5 V3.5" stroke="#777"/></svg>
<div class="a" style="left:770px;top:619px;width:4px;height:1px;background:#444"></div>
<div class="a" style="left:776px;top:619px;width:57px;height:1px;background:#999"></div>
<div class="a" style="left:808.5px;top:616px;width:2px;height:6px;background:#444"></div>
<div class="a" style="left:832px;top:619px;width:5px;height:1px;background:#444"></div>
<div class="a" style="left:834px;top:617px;width:1px;height:5px;background:#444"></div>
<div class="t" style="left:844.8px;top:616.41px;font-size:6.6px;color:#444;letter-spacing:-0.1px;transform-origin:0 50%;transform:scaleX(0.9023);">175%</div>
<div class="a" style="left:0px;top:625px;width:868px;height:5px;background:#0c1014"></div>
<div class="a" style="left:0px;top:625px;width:26px;height:5px;background:#050b12"></div>
<div class="a" style="left:26px;top:625px;width:186px;height:5px;background:#2b2b2b"></div>
<div class="a" style="left:212px;top:625px;width:212px;height:5px;background:#0d0f12"></div>
<div class="a" style="left:424px;top:625px;width:25px;height:5px;background:#3a3c3c"></div>
<div class="a" style="left:806px;top:628px;width:2px;height:2px;background:#9a9a9a"></div>
<div class="a" style="left:810px;top:628px;width:2px;height:2px;background:#9a9a9a"></div>
<div class="a" style="left:814px;top:628px;width:2px;height:2px;background:#9a9a9a"></div>
<div class="a" style="left:822px;top:628px;width:2px;height:2px;background:#9a9a9a"></div>
<div class="a" style="left:826px;top:628px;width:2px;height:2px;background:#9a9a9a"></div>
<div class="a" style="left:833px;top:628px;width:2px;height:2px;background:#9a9a9a"></div>
<div class="a" style="left:862px;top:625px;width:1px;height:5px;background:#555"></div>
</body></html>
